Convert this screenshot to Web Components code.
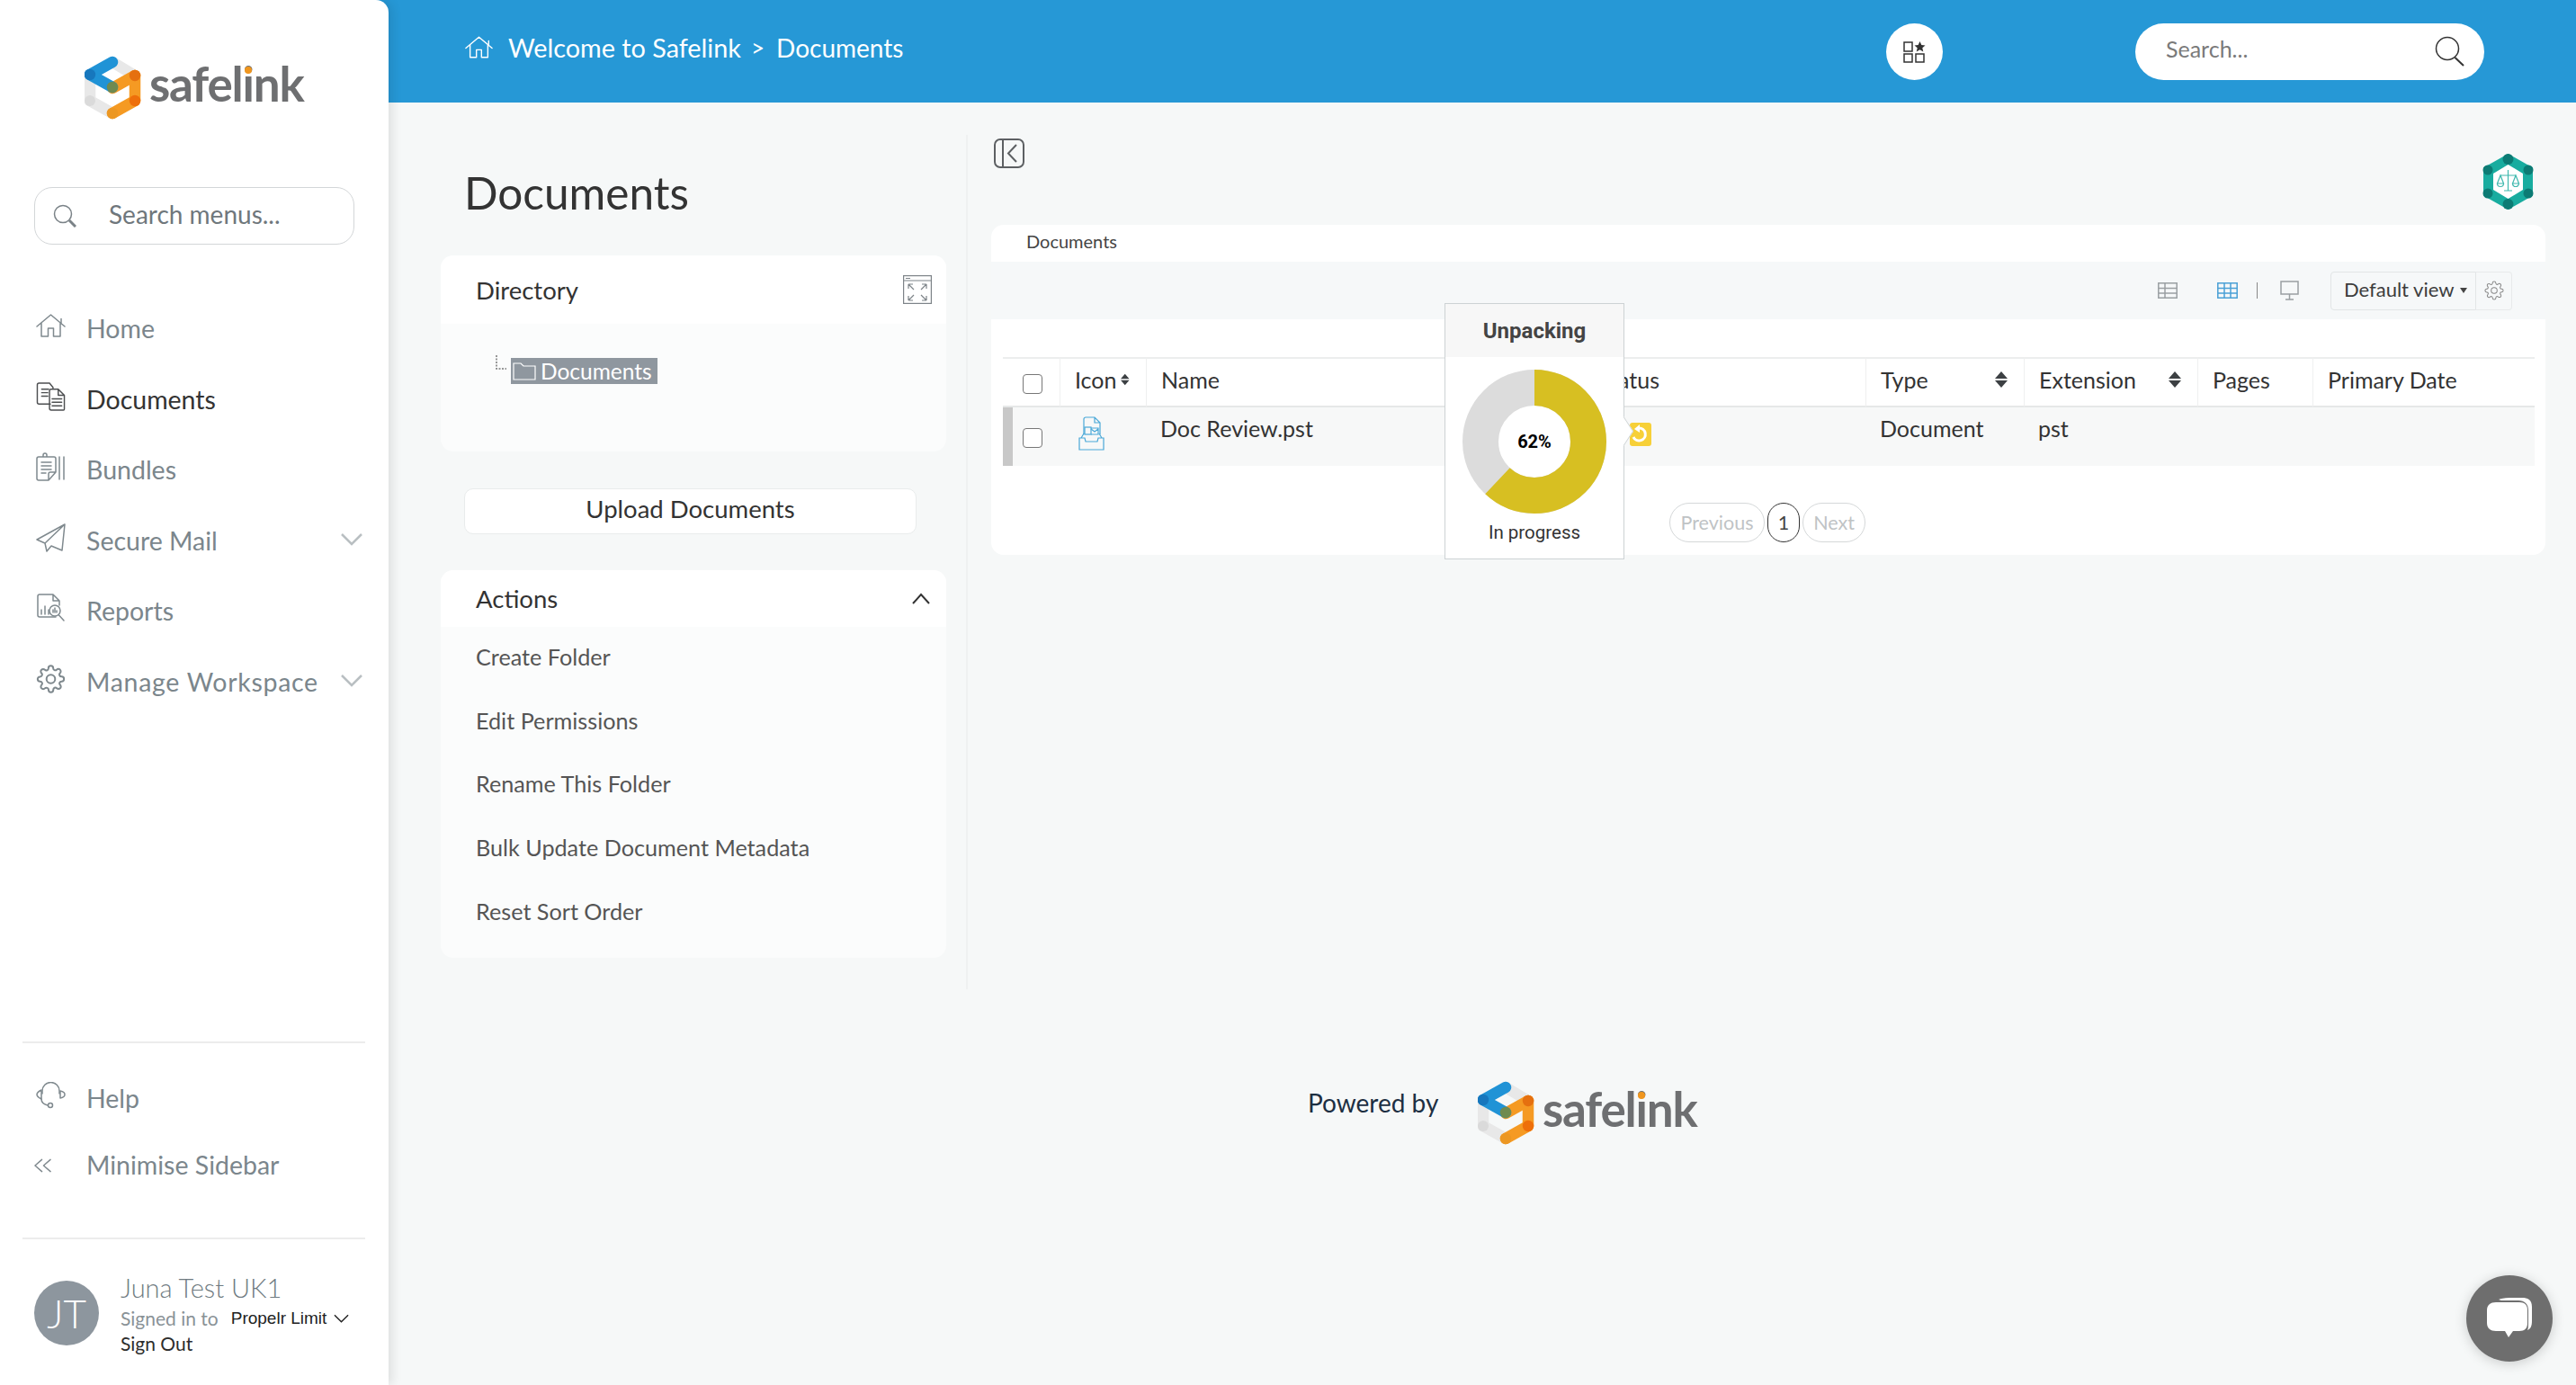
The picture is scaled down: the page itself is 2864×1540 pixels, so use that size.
<!DOCTYPE html>
<html lang="en">
<head>
<meta charset="utf-8">
<title>Safelink Documents</title>
<style>
  html, body { margin: 0; height: 100%; background: #f6f8f8; }
  body { font-family: "Lato", "Liberation Sans", sans-serif; color: #333; overflow: hidden; }
</style>
</head>
<body>
<sl-app></sl-app>

<script>
// ============================================
// Helper: element with an open shadow root
// ============================================
function defineElement(name, styles, render) {
  customElements.define(name, class extends HTMLElement {
    connectedCallback() {
      if (this.shadowRoot) return;
      const root = this.attachShadow({ mode: 'open' });
      root.innerHTML = `<style>${styles}</style>${render(this)}`;
    }
  });
}

// ============================================
// Icons
// ============================================
const GEAR = '<circle cx="12" cy="12" r="3.6"/><path d="M19.4 15a1.65 1.65 0 0 0 .33 1.82l.06.06a2 2 0 0 1 0 2.83 2 2 0 0 1-2.83 0l-.06-.06a1.65 1.65 0 0 0-1.82-.33 1.65 1.65 0 0 0-1 1.51V21a2 2 0 0 1-2 2 2 2 0 0 1-2-2v-.09A1.65 1.65 0 0 0 9 19.4a1.65 1.65 0 0 0-1.82.33l-.06.06a2 2 0 0 1-2.83 0 2 2 0 0 1 0-2.83l.06-.06a1.65 1.65 0 0 0 .33-1.82 1.65 1.65 0 0 0-1.51-1H3a2 2 0 0 1-2-2 2 2 0 0 1 2-2h.09A1.65 1.65 0 0 0 4.6 9a1.65 1.65 0 0 0-.33-1.82l-.06-.06a2 2 0 0 1 0-2.83 2 2 0 0 1 2.83 0l.06.06a1.65 1.65 0 0 0 1.82.33H9a1.65 1.65 0 0 0 1-1.51V3a2 2 0 0 1 2-2 2 2 0 0 1 2 2v.09a1.65 1.65 0 0 0 1 1.51 1.65 1.65 0 0 0 1.82-.33l.06-.06a2 2 0 0 1 2.83 0 2 2 0 0 1 0 2.83l-.06.06a1.65 1.65 0 0 0-.33 1.82V9a1.65 1.65 0 0 0 1.51 1H21a2 2 0 0 1 2 2 2 2 0 0 1-2 2h-.09a1.65 1.65 0 0 0-1.51 1z"/>';

const ICONS = {
  home: ['0 0 33 27', '<path d="M1 14 16.500 1 32 14M28 5.500V11M6 10v15h7.500v-9h6v9H27V10"/>'],
  docs: ['0 0 33 33', '<path d="M16 25H3a2 2 0 0 1-2-2V3a2 2 0 0 1 2-2h12l4 5v1M6 8h8M6 12h7M6 16h7"/><path d="M15 10a2 2 0 0 1 2-2h8l7 7v16a1 1 0 0 1-1 1H17a2 2 0 0 1-2-2zM25 8v7h7M18 19h11M18 23h11M18 27h11"/>'],
  bundles: ['0 0 33 32', '<path d="M3 5h17a2 2 0 0 1 2 2v15l-8 9H3a2 2 0 0 1-2-2V7a2 2 0 0 1 2-2zM14 31v-7a2 2 0 0 1 2-2h6M8 5V3a2 2 0 0 1 4 0v2M6 11h11M6 15h11M6 19h11M6 23h5M26 5v25M31 5v25"/>'],
  plane: ['0 0 33 32', '<path d="M32 1 1 18l9 4zM32 1 10 22l2 9 5-6M32 1l-3 29-12-5"/>'],
  reports: ['0 0 31 32', '<path d="M21 26H3a2 2 0 0 1-2-2V3a2 2 0 0 1 2-2h15l7 7v5M18 1v7h7M5 23v-5M9 23v-9M13 23v-5"/><circle cx="20" cy="19" r="6"/><path d="M18 21v-3M20 21v-5M22 21v-2M24.500 24 30 30"/>'],
  gear: ['0 0 24 24', GEAR],
  help: ['0 0 33 30', '<path d="M7 13V10a9.500 9.500 0 0 1 19 0v3M6 19c0 4 3 6 7 7"/><path d="M6 9c-3 1.500-5 3-5 5s2 3.500 5 5zM27 10v8c3-.5 5-2 5-4s-2-3.500-5-4z"/><circle cx="16" cy="26" r="2.500"/>'],
  collapse: ['0 0 20 16', '<path d="M9 1 1 8l8 7M19 1l-8 7 8 7"/>']
};

function icon(name, size, extra = '') {
  const [box, body] = ICONS[name];
  return `<svg viewBox="${box}" width="${size[0]}" height="${size[1]}" fill="none" stroke="currentColor" stroke-width="1.500" stroke-linecap="round" stroke-linejoin="round" ${extra}>${body}</svg>`;
}

const CHEVRON = '<svg viewBox="0 0 24 14" width="24" height="14" fill="none" stroke="#b9bfc2" stroke-width="2.500"><path d="M1 1l11 11L23 1"/></svg>';

// ============================================
// Logo
// ============================================
defineElement('sl-logo', `
  :host { display: inline-flex; align-items: flex-start; gap: 9px; height: 71px; }
  svg { display: block; flex: none; }
  .word { font: 700 53px/1 "Lato", sans-serif; color: #6e6f71; letter-spacing: -1.200px; margin-top: 4px; white-space: nowrap; }
  .i { position: relative; display: inline-block; }
  .i::after { content: ""; position: absolute; left: 50%; top: 8px; width: 8px; height: 8px; margin-left: -4px; border-radius: 50%; background: #f0961e; }
`, () => `
  <svg viewBox="0 0 63 71" width="63" height="71" fill="none" stroke-width="12.500" stroke-linecap="round" stroke-linejoin="round">
    <g stroke="#e8e8e8"><path d="M31 7 56 22"/><path d="M6 21V50"/><path d="M6 50 31 64"/></g>
    <circle cx="6" cy="50" r="6" fill="#dadada"/>
    <g stroke="#f59a23"><path d="M31 36 56 22"/><path d="M56 22V50"/><path d="M56 50 31 64"/></g>
    <g stroke="#2093d6"><path d="M31 7 6 21"/><path d="M6 21 31 35"/></g>
    <circle cx="6" cy="21" r="6.200" fill="#1777bd"/>
    <circle cx="31" cy="35" r="6.200" fill="#6f8a50"/>
    <circle cx="56" cy="22" r="6.200" fill="#e5700f"/>
    <circle cx="56" cy="50" r="6.200" fill="#ee6f0a"/>
    <circle cx="31" cy="64" r="6.200" fill="#ec9722"/>
  </svg>
  <span class="word">safel<span class="i">i</span>nk</span>
`);

// ============================================
// Sidebar
// ============================================
defineElement('sl-nav-item', `
  :host { display: flex; align-items: center; height: 78.500px; padding-left: 40px; color: #7b868c; font-size: 28.500px; position: relative; box-sizing: border-box; white-space: nowrap; }
  :host([active]) { color: #333; }
  :host([wide]) { letter-spacing: .7px; }
  .ico { width: 56px; flex: none; display: flex; align-items: center; color: #7f898e; margin-top: -6px; }
  :host([active]) .ico { color: #4d4f51; }
  :host([back]) .ico { margin-left: -2px; width: 58px; margin-top: 2px; }
  .chev { position: absolute; left: 379px; top: 17px; }
`, (el) => `
  <span class="ico">${icon(el.getAttribute('icon'), (el.getAttribute('size') || '33,32').split(',').map(Number))}</span>
  <slot></slot>
  ${el.hasAttribute('open') ? `<span class="chev">${CHEVRON}</span>` : ''}
`);

defineElement('sl-sidebar', `
  :host { display: flex; flex-direction: column; width: 432px; height: 1540px; background: #fff; border-radius: 0 14px 0 0; box-shadow: 4px 0 12px rgba(0,0,0,.10); position: relative; z-index: 2; flex: none; }
  sl-logo { margin: 62px 0 0 94px; }
  .search { display: flex; align-items: center; box-sizing: border-box; height: 64px; width: 356px; margin: 75px 0 54px 38px; border: 1.500px solid #d3d6d8; border-radius: 20px; padding-left: 20px; color: #6f777c; font-size: 28px; }
  .search svg { margin-right: 36px; flex: none; }
  .search span { margin-top: -5px; }
  .bottom { margin-top: auto; padding-bottom: 33px; }
  hr { border: 0; height: 2px; background: #ececec; margin: 0 26px 0 25px; }
  .low { padding: 24px 0 44px; }
  .low sl-nav-item { height: 74px; }
  .user { display: flex; padding: 46px 0 0 38px; }
  .avatar { width: 72px; height: 72px; border-radius: 50%; background: #8d969e; color: #fff; font-size: 44px; font-weight: 300; display: flex; align-items: center; justify-content: center; flex: none; }
  .info { margin: -8px 0 0 24px; }
  .name { font-size: 29px; font-weight: 300; color: #6f7b81; line-height: 32px; }
  .org { display: flex; align-items: center; font-size: 21px; color: #8a9297; line-height: 30px; margin-top: 3px; white-space: nowrap; }
  .org b { font: 400 19px "Liberation Sans", sans-serif; color: #222; margin: 0 8px 0 14px; }
  .out { font-size: 21px; color: #2d2d2d; line-height: 26px; }
`, () => `
  <sl-logo></sl-logo>
  <div class="search">
    <svg viewBox="0 0 26 26" width="26" height="26" fill="none" stroke="#7a8287" stroke-width="1.500"><circle cx="11" cy="11" r="9.500"/><path d="M18 18l7 7" stroke-width="3"/></svg>
    <span>Search menus...</span>
  </div>
  <nav>
    <sl-nav-item icon="home" size="33,27">Home</sl-nav-item>
    <sl-nav-item icon="docs" active>Documents</sl-nav-item>
    <sl-nav-item icon="bundles">Bundles</sl-nav-item>
    <sl-nav-item icon="plane" open>Secure Mail</sl-nav-item>
    <sl-nav-item icon="reports">Reports</sl-nav-item>
    <sl-nav-item icon="gear" open wide>Manage Workspace</sl-nav-item>
  </nav>
  <div class="bottom">
    <hr>
    <div class="low">
      <sl-nav-item icon="help" size="33,30">Help</sl-nav-item>
      <sl-nav-item icon="collapse" size="19,16" back>Minimise Sidebar</sl-nav-item>
    </div>
    <hr>
    <div class="user">
      <div class="avatar">JT</div>
      <div class="info">
        <div class="name">Juna Test UK1</div>
        <div class="org">Signed in to <b>Propelr Limit</b>
          <svg viewBox="0 0 18 10" width="17" height="10" fill="none" stroke="#222" stroke-width="1.500"><path d="M1 1l8 8 8-8"/></svg>
        </div>
        <div class="out">Sign Out</div>
      </div>
    </div>
  </div>
`);

// ============================================
// Top bar (runs under the sidebar's rounded corner)
// ============================================
defineElement('sl-topbar', `
  :host { display: flex; align-items: center; height: 114px; margin-left: -20px; background: #2698d6; color: #fff; box-sizing: border-box; padding-left: 105px; position: relative; }
  .crumbs { display: flex; align-items: center; font-size: 28.800px; margin-top: -8px; white-space: nowrap; }
  .crumbs svg { margin-right: 17px; }
  .crumbs i { font-style: normal; margin: 0 13px 0 11px; font-size: 26px; }
  .crumbs .last { font-size: 28px; }
  .fav { width: 63px; height: 63px; border-radius: 50%; background: #fff; margin-left: auto; display: flex; align-items: center; justify-content: center; }
  .search { display: flex; align-items: center; justify-content: space-between; box-sizing: border-box; width: 388px; height: 63px; background: #fff; border-radius: 32px; margin: 0 102px 0 214px; padding: 0 21px 0 34px; color: #7a7a7a; font-size: 25px; }
  .search span { margin-top: -6px; }
`, () => `
  <div class="crumbs">
    ${icon('home', [31, 26])}
    <span>Welcome to Safelink</span><i>&gt;</i><span class="last">Documents</span>
  </div>
  <div class="fav">
    <svg viewBox="0 0 25 25" width="25" height="25" fill="none" stroke="#333" stroke-width="1.500">
      <rect x="1" y="2" width="9" height="10"/><rect x="1" y="15" width="9" height="9"/><rect x="14" y="15" width="9" height="9"/>
      <path d="M18.500 1l1.800 4 4.200.4-3.200 2.800 1 4.300-3.800-2.300-3.800 2.300 1-4.300-3.200-2.800 4.200-.4z" fill="#333" stroke="none"/>
    </svg>
  </div>
  <div class="search">
    <span>Search...</span>
    <svg viewBox="0 0 34 34" width="34" height="34" fill="none" stroke="#333" stroke-width="1.500"><circle cx="14" cy="14" r="12.500"/><path d="M22.500 24 32 33" stroke-width="2"/></svg>
  </div>
`);

// ============================================
// Left panel cards
// ============================================
defineElement('sl-card', `
  :host { display: block; border-radius: 14px; background: #fbfcfc; overflow: hidden; box-sizing: border-box; }
  header { display: flex; align-items: center; justify-content: space-between; background: #fff; font-size: 27.500px; color: #333; padding: 0 18px 0 39px; height: var(--head, 76px); }
`, () => `
  <header><slot name="title"></slot><slot name="tool"></slot></header>
  <slot></slot>
`);

defineElement('sl-docs-panel', `
  :host { display: block; box-sizing: border-box; width: 644px; height: 950px; margin-top: 36px; padding: 34px 0 0 58px; border-right: 2px solid #eff1f1; flex: none; }
  h1 { font-size: 49.500px; font-weight: 400; line-height: 60px; margin: 0 0 40px 26px; color: #333; }
  sl-card { width: 562px; }
  .dir { height: 218px; }
  .dir svg[slot] { margin-right: -2px; }
  .tree { display: flex; align-items: flex-start; padding: 38px 0 0 61px; }
  .tree svg.dots { margin-top: -3px; }
  .sel { display: flex; align-items: center; height: 29px; width: 163px; box-sizing: border-box; background: #8f979f; color: #fff; font-size: 24.500px; padding-left: 2px; margin-left: 5px; }
  .sel svg { margin-right: 5px; }
  .upload { box-sizing: border-box; width: 503px; height: 51px; margin: 41px 0 40px 26px; background: #fff; border: 1.500px solid #e9ecec; border-radius: 10px; text-align: center; font-size: 27.500px; line-height: 44px; color: #333; }
  .actions { height: 431px; --head: 63px; }
  ul { list-style: none; margin: 0; padding: 0 0 0 39px; font-size: 25.200px; color: #555; }
  li { height: 70.700px; line-height: 67px; }
`, () => `
  <h1>Documents</h1>
  <sl-card class="dir">
    <span slot="title">Directory</span>
    <svg slot="tool" viewBox="0 0 32 32" width="32" height="32" fill="none" stroke="#7d8388" stroke-width="1.200"><rect x=".6" y=".6" width="30.800" height="30.800"/><path d="M1 6h30M3 3.500h5" /><path d="M6 10l6 6M6 10v5M6 10h5M26 10l-6 6M26 10v5M26 10h-5M6 28l6-6M6 28v-5M6 28h5M26 28l-6-6M26 28v-5M26 28h-5"/></svg>
    <div class="tree">
      <svg class="dots" viewBox="0 0 12 16" width="12" height="16" fill="none" stroke="#777" stroke-width="1.500" stroke-dasharray="2 1.500"><path d="M1 0v15h11"/></svg>
      <div class="sel">
        <svg viewBox="0 0 26 21" width="26" height="21" fill="none" stroke="#fff" stroke-width="1.200"><path d="M1 19V2h8l3 3h13v15H1z"/></svg>
        <span>Documents</span>
      </div>
    </div>
  </sl-card>
  <div class="upload">Upload Documents</div>
  <sl-card class="actions">
    <span slot="title">Actions</span>
    <svg slot="tool" viewBox="0 0 20 13" width="20" height="13" fill="none" stroke="#333" stroke-width="2"><path d="M1 12l9-10 9 10"/></svg>
    <ul>
      <li>Create Folder</li>
      <li>Edit Permissions</li>
      <li>Rename This Folder</li>
      <li>Bulk Update Document Metadata</li>
      <li>Reset Sort Order</li>
    </ul>
  </sl-card>
`);

// ============================================
// Unpacking popover (lies over the table)
// ============================================
defineElement('sl-progress-popover', `
  :host { display: block; position: absolute; left: 504px; top: 87px; width: 200px; height: 285px; box-sizing: border-box; background: #fff; border: 1.500px solid #cdd2d4; font-family: "Roboto", sans-serif; z-index: 3; }
  h3 { margin: 0; height: 59px; background: #f7f7f7; font-size: 24px; font-weight: 700; color: #444; text-align: center; line-height: 60px; }
  .donut { display: grid; width: 160px; height: 160px; margin: 14px auto 0; }
  .donut > * { grid-area: 1 / 1; }
  .pct { place-self: center; font-size: 20px; font-weight: 700; color: #000; }
  p { margin: 9px 0 0; text-align: center; font-size: 20.500px; color: #333; }
  .tip { position: absolute; right: -10px; top: 132px; width: 18px; height: 18px; background: #fff; border: 1.500px solid #cdd2d4; border-width: 1.500px 1.500px 0 0; transform: rotate(45deg) skew(12deg, 12deg); }
`, () => `
  <h3>Unpacking</h3>
  <div class="donut">
    <svg viewBox="0 0 160 160" width="160" height="160" fill="none" stroke-width="40">
      <circle cx="80" cy="80" r="60" stroke="#dcdcdc"/>
      <circle cx="80" cy="80" r="60" stroke="#d7bf22" pathLength="100" stroke-dasharray="62 38" transform="rotate(-90 80 80)"/>
    </svg>
    <span class="pct">62%</span>
  </div>
  <p>In progress</p>
  <span class="tip"></span>
`);

// ============================================
// Documents table card
// ============================================
const SORT = '<svg viewBox="0 0 14 18" width="14" height="18" fill="#3c4043"><path d="M7 0l7 8H0zM7 18l7-8H0z"/></svg>';

defineElement('sl-table-card', `
  :host { display: block; position: relative; width: 1728px; height: 367px; background: #fff; border-radius: 14px; box-sizing: border-box; }
  .title { height: 41px; padding-left: 39px; font-size: 20px; line-height: 36px; color: #444; }
  .bar { display: flex; align-items: center; justify-content: flex-end; height: 64px; background: #f6f8f9; padding-right: 37px; }
  .bar svg { display: block; flex: none; }
  .sep { width: 1.500px; height: 18px; background: #888; margin: 0 25px 0 21px; }
  .view { display: flex; align-items: center; height: 43px; border: 1.500px solid #e2e5e6; box-sizing: border-box; margin-left: 35px; border-radius: 4px 0 0 4px; padding: 0 10px 3px 14px; font-size: 22px; color: #3d3d3d; white-space: nowrap; width: 162px; }
  .view i { width: 0; height: 0; border: 4.500px solid transparent; border-top: 6px solid #444; border-bottom: 0; margin: 3px 0 0 6px; }
  .cfg { display: flex; align-items: center; justify-content: center; width: 40px; height: 43px; box-sizing: border-box; border: 1.500px solid #e8eaeb; border-left: 0; border-radius: 0 4px 4px 0; color: #888; }
  table { border-collapse: separate; border-spacing: 0; table-layout: fixed; width: 1703px; margin: 42px 0 0 13px; font-size: 25px; color: #333; }
  th { height: 56px; box-sizing: border-box; font-weight: 400; text-align: left; padding: 0 0 6px 16px; border-top: 2px solid #eceeee; border-bottom: 2px solid #e6e8e8; border-left: 1.500px solid #eff0f0; white-space: nowrap; }
  th:first-child { border-left: 0; padding: 3px 0 0 22px; }
  th .h { display: flex; align-items: center; justify-content: space-between; padding-right: 18px; }
  th.icon .h { justify-content: flex-start; gap: 5px; }
  td { height: 65px; box-sizing: border-box; background: #f7f8f8; vertical-align: top; padding: 8px 0 0 16px; }
  td:first-child { border-left: 11px solid #c8c8c8; padding: 23px 0 0 11px; }
  td.ico { padding: 10px 0 0 21px; }
  input { appearance: none; display: block; width: 22px; height: 22px; margin: 0; box-sizing: border-box; border: 1.500px solid #777; border-radius: 4px; background: #fff; }
  .status { display: block; margin: 9px 0 0 36px; }
  .pager { display: flex; gap: 3px; margin: 41px 0 0 754px; font-size: 21.500px; color: #bfc3c5; }
  .pager span { display: flex; align-items: center; justify-content: center; box-sizing: border-box; height: 44px; border: 1.500px solid #d5d8d9; border-radius: 22px; }
  .pager .cur { border-color: #333; color: #444; width: 36px; }
`, () => `
  <div class="title">Documents</div>
  <div class="bar">
    <svg viewBox="0 0 22 18" width="22" height="18" fill="none" stroke="#9a9fa2" stroke-width="1.500"><rect x=".8" y=".8" width="20.400" height="16.400"/><path d="M1 6.500h20M1 12h20M8 1v16"/></svg>
    <svg viewBox="0 0 23 18" width="23" height="18" fill="none" stroke="#4aa0d6" stroke-width="1.500" style="margin-left:44px"><rect x=".8" y=".8" width="21.400" height="16.400"/><path d="M1 6.500h21M1 12h21M8 1v16M15 1v16"/></svg>
    <span class="sep"></span>
    <svg viewBox="0 0 21 22" width="21" height="22" fill="none" stroke="#9a9fa2" stroke-width="1.500"><path d="M1 1h19v14H1zM10.500 15v6M6 21h9"/></svg>
    <div class="view">Default view<i></i></div>
    <div class="cfg"><svg viewBox="0 0 24 24" width="22" height="22" fill="none" stroke="currentColor" stroke-width="1.100">${GEAR}</svg></div>
  </div>
  <table>
    <colgroup>
      <col style="width:63px"><col style="width:96px"><col style="width:486px"><col style="width:314px">
      <col style="width:176px"><col style="width:193px"><col style="width:128px"><col style="width:247px">
    </colgroup>
    <thead><tr>
      <th><input type="checkbox" aria-label="Select all"></th>
      <th class="icon"><div class="h">Icon ${SORT}</div></th>
      <th>Name</th>
      <th>Status</th>
      <th><div class="h">Type ${SORT}</div></th>
      <th><div class="h">Extension ${SORT}</div></th>
      <th>Pages</th>
      <th>Primary Date</th>
    </tr></thead>
    <tbody><tr>
      <td><input type="checkbox" aria-label="Select row"></td>
      <td class="ico">
        <svg viewBox="0 0 29 38" width="29" height="38" fill="none" stroke="#4aa8d8" stroke-width="1.200">
          <path d="M6 20V3a2 2 0 0 1 2-2h10l6 6v13M18 1v6h6"/>
          <rect x="7" y="12" width="7" height="8"/><path d="M14 13h8v7h-8M14 14l4 3 4-3"/>
          <path d="M1 24h6l1 4h13l1-4h6v13H1zM3 24l3-5M26 24l-3-5"/>
        </svg>
      </td>
      <td>Doc Review.pst</td>
      <td>
        <svg class="status" viewBox="0 0 24 26" width="24" height="26"><rect width="24" height="26" rx="3" fill="#f7d038"/><path d="M10 6a7 7 0 1 1-6 10" fill="none" stroke="#fff" stroke-width="3"/><path d="M5 7l6-5v9z" fill="#fff"/></svg>
      </td>
      <td>Document</td>
      <td>pst</td>
      <td></td>
      <td></td>
    </tr></tbody>
  </table>
  <div class="pager">
    <span style="width:106px">Previous</span>
    <span class="cur">1</span>
    <span style="width:70px">Next</span>
  </div>
  <sl-progress-popover></sl-progress-popover>
`);

// ============================================
// Main column
// ============================================
defineElement('sl-doc-view', `
  :host { display: block; flex: 1; padding: 40px 0 0 26px; min-width: 0; }
  .top { display: flex; justify-content: space-between; height: 96px; width: 1728px; }
  .back { display: block; margin-left: 3px; }
  .badge { display: block; margin: 16px 13px 0 0; }
`, () => `
  <div class="top">
    <svg class="back" viewBox="0 0 34 33" width="34" height="33" fill="none" stroke="#5d6063" stroke-width="2"><rect x="1" y="1" width="32" height="31" rx="6"/><path d="M10 1v31"/><path d="M25 7l-9 9.500 9 9.500"/></svg>
    <svg class="badge" viewBox="0 0 57 64" width="57" height="64">
      <path d="M28.500 1 56 16.500v31L28.500 63 1 47.500v-31z" fill="#18ac9f"/>
      <path d="M28.500 13 45 23v18L28.500 51 12 41V23z" fill="#fff"/>
      <g fill="#0c7b74"><circle cx="28.500" cy="7" r="6"/><circle cx="28.500" cy="57" r="6"/><circle cx="6" cy="19" r="5.500"/><circle cx="51" cy="19" r="5.500"/><circle cx="6" cy="45" r="5.500"/><circle cx="51" cy="45" r="5.500"/></g>
      <g fill="none" stroke="#3fb8ae" stroke-width="1.200"><path d="M28.500 19v23M24 42h9M20 25h17M20 25l-3.500 9h7zM37 25l-3.500 9h7zM16.500 34a3.500 3.500 0 0 0 7 0M33.500 34a3.500 3.500 0 0 0 7 0"/></g>
    </svg>
  </div>
  <sl-table-card></sl-table-card>
`);

defineElement('sl-footer', `
  :host { display: flex; align-items: flex-start; margin-top: 102px; padding-left: 1022px; }
  span { font-size: 28px; color: #1d2f42; width: 189px; margin-top: 7px; flex: none; }
`, () => `<span>Powered by</span><sl-logo></sl-logo>`);

defineElement('sl-chat-button', `
  :host { position: fixed; left: 2742px; top: 1418px; width: 96px; height: 96px; border-radius: 50%; background: #6e6e6e; box-shadow: 0 2px 14px rgba(0,0,0,.18); display: flex; align-items: center; justify-content: center; z-index: 5; }
`, () => `
  <svg viewBox="0 0 52 48" width="52" height="48">
    <path d="M14 3c2-1 6-2 12-2h14c6 0 11 2 11 10v16c0 6-2 9-5 10 1-2 1-4 1-9V15c0-7-4-11-11-11H20c-2 0-4 0-6-1z" fill="#fff"/>
    <path d="M11 6h26c6 0 9 3 9 9v14c0 6-3 9-9 9H30l-5 7-4-7H11c-6 0-10-3-10-9V15c0-6 4-9 10-9z" fill="#fff"/>
  </svg>
`);

defineElement('sl-app', `
  :host { display: flex; width: 2864px; height: 1540px; overflow: hidden; background: #f6f8f8; }
  .main { flex: 1; min-width: 0; }
  .content { display: flex; height: 986px; }
`, () => `
  <sl-sidebar></sl-sidebar>
  <div class="main">
    <sl-topbar></sl-topbar>
    <div class="content">
      <sl-docs-panel></sl-docs-panel>
      <sl-doc-view></sl-doc-view>
    </div>
    <sl-footer></sl-footer>
  </div>
  <sl-chat-button></sl-chat-button>
`);
</script>
</body>
</html>
